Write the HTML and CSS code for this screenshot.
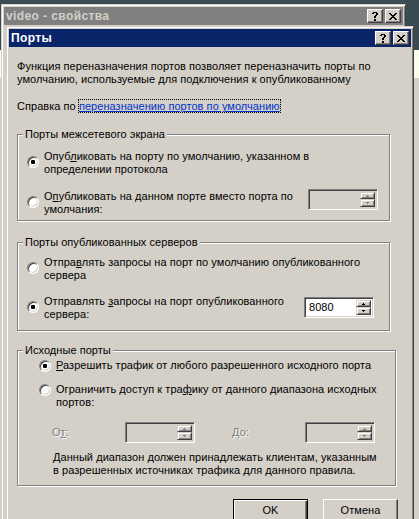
FILE: index.html
```html
<!DOCTYPE html>
<html lang="ru">
<head>
<meta charset="utf-8">
<title>Порты</title>
<link rel="stylesheet" href="styles.css">
</head>
<body>
<div class="desktop">
  <div class="window outer">
    <div class="caption inactive">
      <span class="caption-text">video - свойства</span>
      <div class="caption-btns">
        <span class="cbtn"><svg width="6" height="9" viewBox="0 0 6 9" shape-rendering="crispEdges"><path d="M1 0h4v1h-4z M0 1h2v1h-2z M4 1h2v1h-2z M4 2h2v1h-2z M3 3h2v1h-2z M2 4h2v2h-2z M2 7h2v2h-2z" fill="#000"/></svg></span>
        <span class="cbtn"><svg width="8" height="7" viewBox="0 0 8 7" shape-rendering="crispEdges"><path d="M0 0h2v1h-2z M6 0h2v1h-2z M1 1h2v1h-2z M5 1h2v1h-2z M2 2h4v1h-4z M3 3h2v1h-2z M2 4h4v1h-4z M1 5h2v1h-2z M5 5h2v1h-2z M0 6h2v1h-2z M6 6h2v1h-2z" fill="#000"/></svg></span>
      </div>
    </div>
  </div>

  <div class="window dialog">
    <div class="caption active">
      <span class="caption-text">Порты</span>
      <div class="caption-btns">
        <span class="cbtn"><svg width="6" height="9" viewBox="0 0 6 9" shape-rendering="crispEdges"><path d="M1 0h4v1h-4z M0 1h2v1h-2z M4 1h2v1h-2z M4 2h2v1h-2z M3 3h2v1h-2z M2 4h2v2h-2z M2 7h2v2h-2z" fill="#000"/></svg></span>
        <span class="cbtn"><svg width="8" height="7" viewBox="0 0 8 7" shape-rendering="crispEdges"><path d="M0 0h2v1h-2z M6 0h2v1h-2z M1 1h2v1h-2z M5 1h2v1h-2z M2 2h4v1h-4z M3 3h2v1h-2z M2 4h4v1h-4z M1 5h2v1h-2z M5 5h2v1h-2z M0 6h2v1h-2z M6 6h2v1h-2z" fill="#000"/></svg></span>
      </div>
    </div>

    <div class="content">
      <p class="intro">Функция переназначения портов позволяет переназначить порты по<br>умолчанию, используемые для подключения к опубликованному</p>
      <p class="help">Справка по <a class="link">переназначению портов по умолчанию</a></p>

      <div class="group g1">
        <div class="group-title">Порты межсетевого экрана</div>
        <div class="option first">
          <span class="radio checked"></span>
          <span class="label">Опуб<u>л</u>иковать на порту по умолчанию, указанном в<br>определении протокола</span>
        </div>
        <div class="option second">
          <span class="radio"></span>
          <span class="label">О<u>п</u>убликовать на данном порте вместо порта по<br>умолчания:</span>
          <span class="spin disabled">
            <span class="spin-value"></span>
            <span class="spin-btns">
              <span class="sbtn up"><svg width="3" height="2" viewBox="0 0 3 2" shape-rendering="crispEdges"><path d="M1 0h1v1h1v1h-3v-1h1z" fill="#808080"/></svg></span>
              <span class="sbtn down"><svg width="3" height="2" viewBox="0 0 3 2" shape-rendering="crispEdges"><path d="M0 0h3v1h-1v1h-1v-1h-1z" fill="#808080"/></svg></span>
            </span>
          </span>
        </div>
      </div>

      <div class="group g2">
        <div class="group-title">Порты опубликованных серверов</div>
        <div class="option first">
          <span class="radio"></span>
          <span class="label">Отпра<u>в</u>лять запросы на порт по умолчанию опубликованного<br>сервера</span>
        </div>
        <div class="option second">
          <span class="radio checked"></span>
          <span class="label">Отправлять <u>з</u>апросы на порт опубликованного<br>сервера:</span>
          <span class="spin">
            <span class="spin-value">8080</span>
            <span class="spin-btns">
              <span class="sbtn up"><svg width="3" height="2" viewBox="0 0 3 2" shape-rendering="crispEdges"><path d="M1 0h1v1h1v1h-3v-1h1z" fill="#000"/></svg></span>
              <span class="sbtn down"><svg width="3" height="2" viewBox="0 0 3 2" shape-rendering="crispEdges"><path d="M0 0h3v1h-1v1h-1v-1h-1z" fill="#000"/></svg></span>
            </span>
          </span>
        </div>
      </div>

      <div class="group g3">
        <div class="group-title">Исходные порты</div>
        <div class="option first">
          <span class="radio checked"></span>
          <span class="label"><u>Р</u>азрешить трафик от любого разрешенного исходного порта</span>
        </div>
        <div class="option second">
          <span class="radio"></span>
          <span class="label">Ограничить доступ к тра<u>ф</u>ику от данного диапазона исходных<br>портов:</span>
        </div>
        <div class="range">
          <span class="range-label disabled-text">О<u>т</u>:</span>
          <span class="spin disabled">
            <span class="spin-value"></span>
            <span class="spin-btns">
              <span class="sbtn up"><svg width="3" height="2" viewBox="0 0 3 2" shape-rendering="crispEdges"><path d="M1 0h1v1h1v1h-3v-1h1z" fill="#808080"/></svg></span>
              <span class="sbtn down"><svg width="3" height="2" viewBox="0 0 3 2" shape-rendering="crispEdges"><path d="M0 0h3v1h-1v1h-1v-1h-1z" fill="#808080"/></svg></span>
            </span>
          </span>
          <span class="range-label to disabled-text"><u>Д</u>о:</span>
          <span class="spin disabled">
            <span class="spin-value"></span>
            <span class="spin-btns">
              <span class="sbtn up"><svg width="3" height="2" viewBox="0 0 3 2" shape-rendering="crispEdges"><path d="M1 0h1v1h1v1h-3v-1h1z" fill="#808080"/></svg></span>
              <span class="sbtn down"><svg width="3" height="2" viewBox="0 0 3 2" shape-rendering="crispEdges"><path d="M0 0h3v1h-1v1h-1v-1h-1z" fill="#808080"/></svg></span>
            </span>
          </span>
        </div>
        <p class="note">Данный диапазон должен принадлежать клиентам, указанным<br>в разрешенных источниках трафика для данного правила.</p>
      </div>

      <div class="buttons">
        <span class="btn default">OK</span>
        <span class="btn">Отмена</span>
      </div>
    </div>
  </div>
</div>
</body>
</html>
```

FILE: styles.css
```css
* { box-sizing: border-box; }

html, body {
  margin: 0;
  padding: 0;
}

body {
  width: 419px;
  height: 519px;
  overflow: hidden;
  font-family: "Liberation Sans", Arial, sans-serif;
  font-size: 11px;
  line-height: 13px;
  letter-spacing: 0.05px;
  color: #000;
  background: linear-gradient(to bottom, #3b4b53 0 50px, #fbfbe9 50px 78px, #d4d0c8 78px);
}

.desktop {
  position: relative;
  width: 419px;
  height: 519px;
}

/* windows on the desktop */
.window {
  position: absolute;
  background: #d4d0c8;
  border: 1px solid;
  border-color: #d4d0c8 #404040 #404040 #d4d0c8;
  box-shadow: inset 1px 1px #fff, inset -1px -1px #808080;
  padding: 2px;
}

.outer {
  left: 1px;
  top: 4px;
  width: 405px;
  height: 540px;
}

.dialog {
  left: 6px;
  top: 26px;
  width: 408px;
  height: 520px;
}

.caption {
  height: 18px;
  display: flex;
  align-items: center;
  justify-content: space-between;
  padding: 0 2px;
  font-weight: bold;
  font-size: 12px;
  line-height: 18px;
  letter-spacing: 0.4px;
}

.caption.inactive {
  background: #808080;
  color: #d4d0c8;
}

.caption.active {
  background: #0a246a;
  color: #fff;
}

.caption-btns {
  display: flex;
  gap: 2px;
}

.cbtn {
  width: 16px;
  height: 14px;
  background: #d4d0c8;
  border: 1px solid;
  border-color: #fff #404040 #404040 #fff;
  box-shadow: inset -1px -1px #808080;
  display: flex;
  align-items: center;
  justify-content: center;
}

.cbtn svg { display: block; }

/* dialog content */
.content {
  padding: 13px 0 0 8px;
}

.intro {
  margin: 0;
}

.help {
  margin: 14px 0 0;
}

.link {
  color: #0033cc;
  text-decoration: underline;
  outline: 1px dotted #000;
}

.group {
  border: 1px solid #808080;
  box-shadow: inset 1px 1px #fff, 1px 1px #fff;
}

.group-title {
  margin: -7px 0 0 5px;
  padding: 0 2px;
  width: fit-content;
  background: #d4d0c8;
}

.g1 {
  width: 373px;
  margin-top: 21px;
  padding: 0 11px 4px 0;
}

.g2 {
  width: 373px;
  margin-top: 21px;
  padding: 0 15px 9px 0;
}

.g3 {
  width: 379px;
  margin-top: 19px;
  padding: 0 0 8px 0;
}

.option {
  display: flex;
  align-items: flex-start;
  padding-left: 9px;
  white-space: nowrap;
}

.g1 .option.first { margin-top: 9px; }
.g1 .option.second { margin-top: 14px; }
.g2 .option.first { margin-top: 7px; }
.g2 .option.second { margin-top: 13px; }

.g3 .option { padding-left: 21px; }
.g3 .option.first { margin-top: 2px; }
.g3 .option.second { margin-top: 11px; }

.radio {
  flex: none;
  position: relative;
  width: 12px;
  height: 12px;
  margin: 6px 5px 0 0;
  border-radius: 50%;
  border: 1px solid;
  border-color: #808080 #fff #fff #808080;
  background: #fff;
  box-shadow: inset 1px 1px 0 #404040, inset -1px -1px 0 #d4d0c8;
}

.g3 .radio { margin-top: 1px; }

.radio.checked::after {
  content: "";
  position: absolute;
  left: 3px;
  top: 3px;
  width: 4px;
  height: 4px;
  border-radius: 1px;
  background: #000;
}

.label u, .range-label u { text-decoration: underline; }

/* spin boxes */
.spin {
  flex: none;
  width: 70px;
  height: 21px;
  border: 1px solid;
  border-color: #808080 #fff #fff #808080;
  box-shadow: inset 1px 1px #404040, inset -1px -1px #d4d0c8;
  background: #fff;
  padding: 2px;
  display: flex;
}

.option .spin {
  margin-left: auto;
}

.g1 .option .spin { margin-top: -1px; }
.g2 .option .spin { margin-top: 2px; }

.spin.disabled { background: #d4d0c8; }

.spin-value {
  flex: 1;
  padding-left: 2px;
  line-height: 15px;
}

.spin-btns {
  width: 15px;
  display: flex;
  flex-direction: column;
}

.sbtn {
  background: #d4d0c8;
  border: 1px solid;
  border-color: #d4d0c8 #404040 #404040 #d4d0c8;
  box-shadow: inset 1px 1px #fff, inset -1px -1px #808080;
  display: flex;
  align-items: center;
  justify-content: center;
}

.sbtn.up { height: 7px; }
.sbtn.down { height: 8px; }
.sbtn svg { display: block; }

/* range row */
.range {
  display: flex;
  align-items: center;
  margin-top: 13px;
  padding-left: 34px;
}

.range-label {
  width: 73px;
}

.range-label.to {
  margin-left: 37px;
}

.disabled-text {
  color: #808080;
  text-shadow: 1px 1px 0 #fff;
}

.note {
  margin: 8px 0 0;
  padding-left: 35px;
}

/* buttons */
.buttons {
  display: flex;
  gap: 15px;
  margin-top: 13px;
  padding-left: 216px;
}

.btn {
  width: 75px;
  height: 23px;
  background: #d4d0c8;
  border: 1px solid;
  border-color: #fff #404040 #404040 #fff;
  box-shadow: inset -1px -1px #808080;
  display: flex;
  align-items: center;
  justify-content: center;
}

.btn.default {
  border-color: #000;
  box-shadow: inset 1px 1px #fff, inset -1px -1px #404040, inset -2px -2px #808080;
}
```
